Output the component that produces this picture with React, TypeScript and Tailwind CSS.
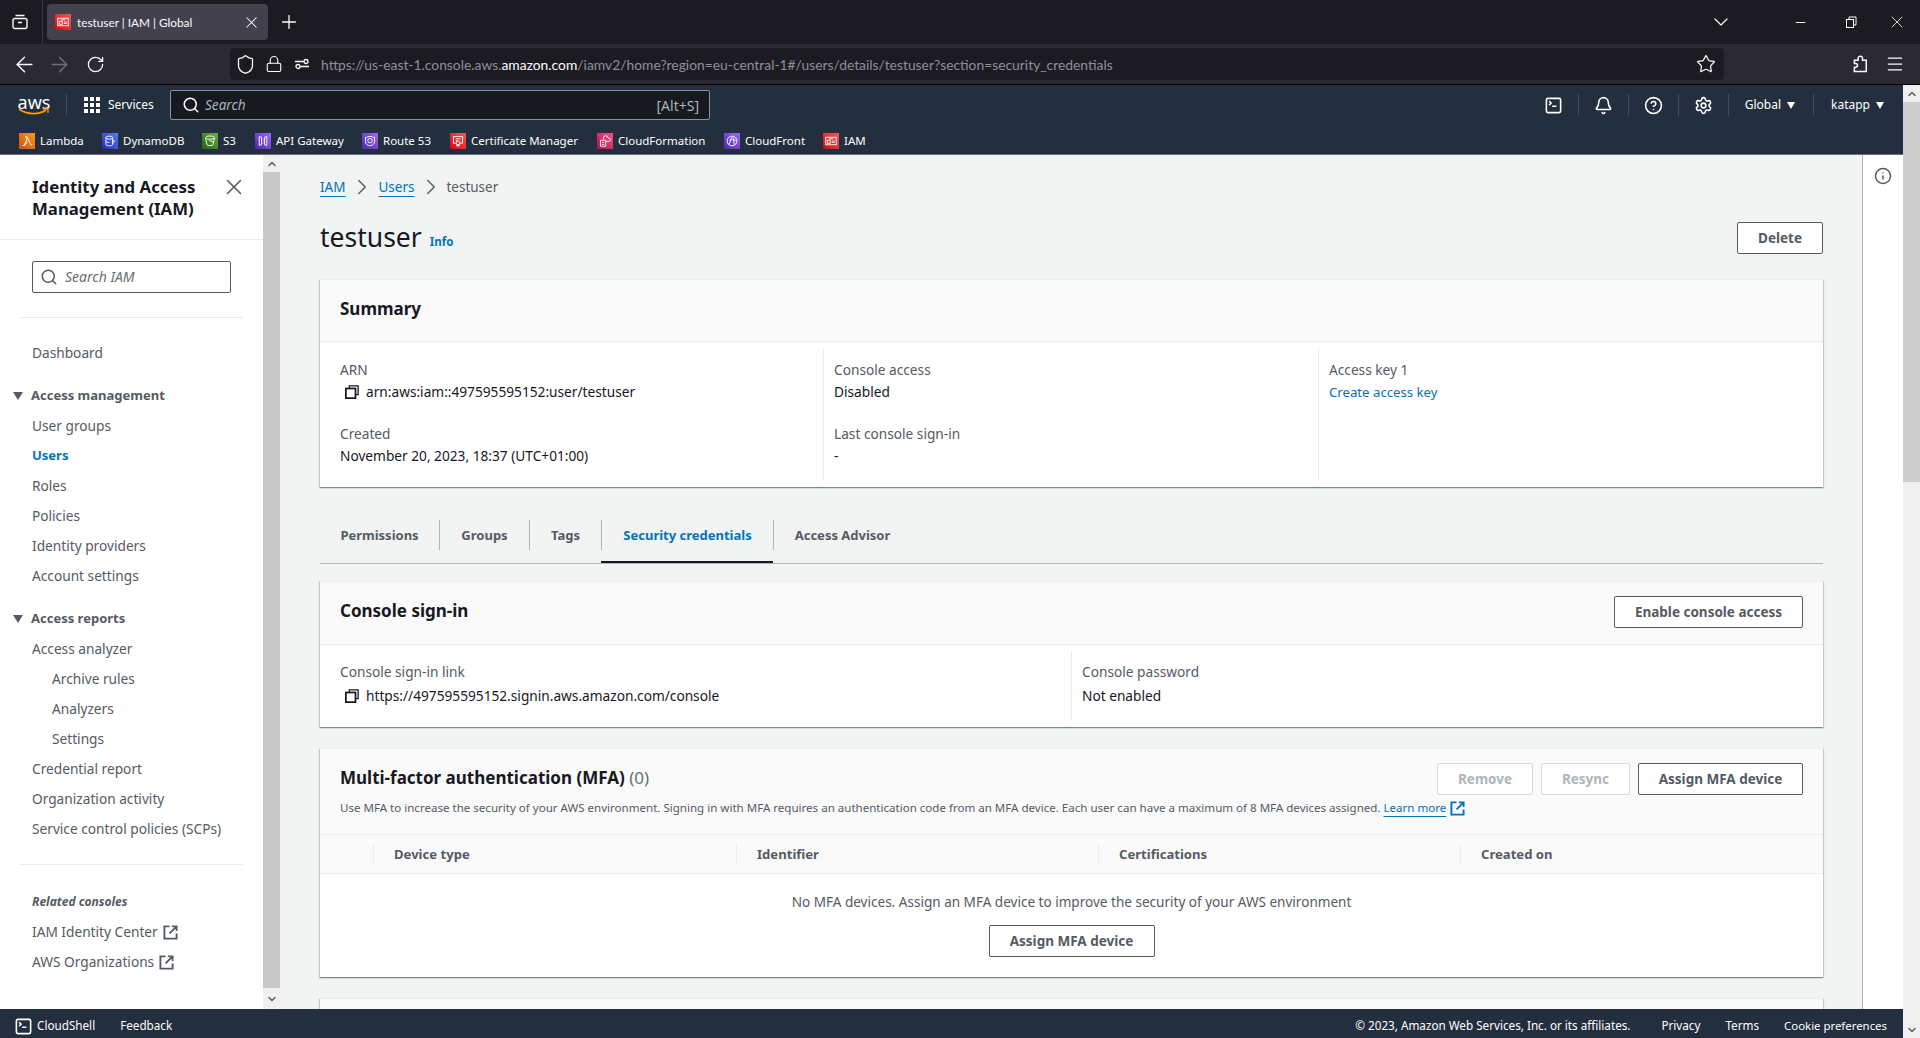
import { ReactNode } from 'react';
import {
  ArrowLeft,
  ArrowRight,
  Bell,
  ChevronDown,
  ChevronRight,
  ChevronUp,
  CircleHelp,
  Info,
  Lock,
  Menu,
  Minus,
  Plus,
  RotateCw,
  Search,
  Settings,
  Shield,
  SquareTerminal,
  Star,
  X,
} from 'lucide-react';

const font = "font-['Noto_Sans',sans-serif]";

function Fav({ from, to, children }: { from: string; to: string; children: ReactNode }) {
  return (
    <span className={`flex h-4 w-4 shrink-0 items-center justify-center ${from} ${to} bg-gradient-to-tr`}>
      <svg width="12" height="12" viewBox="0 0 16 16" fill="none" stroke="white" strokeWidth="1.200">
        {children}
      </svg>
    </span>
  );
}

const lambda = <path d="M4 14 8 6 6 2h2l5 11h2M2 14h3l3-5" />;
const dynamo = (
  <>
    <ellipse cx="7" cy="3.500" rx="4.500" ry="2" />
    <path d="M2.500 3.500v9c0 1 2 2 4.500 2s4.500-1 4.500-2v-9M2.500 8c0 1 2 2 4.500 2M11 7l3 1-3 4" />
  </>
);
const s3 = (
  <>
    <ellipse cx="8" cy="3.500" rx="6" ry="2.200" />
    <path d="M2 3.500 4 13c.2 1.500 7.800 1.500 8 0l2-9.500M7 7l6 3" />
  </>
);
const apiGw = <path d="M3 2v12l3-1V3zM13 2v12l-3-1V3zM8 5v1M8 8v1M8 11v1" />;
const route53 = (
  <>
    <path d="M2 3c2 1 3 0 3-1h6c0 1 1 2 3 1v6c0 3-3 5-6 5.500C5 14 2 12 2 9z" />
    <circle cx="8" cy="7.500" r="3" />
  </>
);
const cert = (
  <>
    <path d="M2 2h12v9h-3M5 11H2V2M5 5h6M5 7.500h2" />
    <circle cx="8" cy="10.500" r="2.500" />
    <path d="M6.500 12.500V15l1.500-1 1.500 1v-2.500" />
  </>
);
const cfn = <path d="M6 6V4a3 3 0 0 1 6 0 2.500 2.500 0 0 1 2 4.500H9M2 7h7v8H2zM4 10h3M4 12.500h3" />;
const cfront = (
  <>
    <circle cx="8" cy="8" r="6.500" />
    <path d="M4 13 7 4c1-2 3-1 3 1l1 8M5 7c2-1 5-1 8 0" />
  </>
);
const iam = (
  <>
    <rect x="1" y="3" width="14" height="10" />
    <rect x="3" y="7" width="4" height="4" />
    <path d="M5 5h6M9 8h4M9 10h4" />
  </>
);

const favorites = [
  { name: 'Lambda', from: 'from-[#c8511b]', to: 'to-[#ff9900]', icon: lambda, w: 'w-[83px]' },
  { name: 'DynamoDB', from: 'from-[#2e27ad]', to: 'to-[#527fff]', icon: dynamo, w: 'w-[100px]' },
  { name: 'S3', from: 'from-[#1b660f]', to: 'to-[#6cae3e]', icon: s3, w: 'w-[53px]' },
  { name: 'API Gateway', from: 'from-[#4d27a8]', to: 'to-[#a166ff]', icon: apiGw, w: 'w-[107px]' },
  { name: 'Route 53', from: 'from-[#4d27a8]', to: 'to-[#a166ff]', icon: route53, w: 'w-[88px]' },
  { name: 'Certificate Manager', from: 'from-[#bd0816]', to: 'to-[#ff5252]', icon: cert, w: 'w-[147px]' },
  { name: 'CloudFormation', from: 'from-[#b0084d]', to: 'to-[#ff4f8b]', icon: cfn, w: 'w-[127px]' },
  { name: 'CloudFront', from: 'from-[#4d27a8]', to: 'to-[#a166ff]', icon: cfront, w: 'w-[99px]' },
  { name: 'IAM', from: 'from-[#bd0816]', to: 'to-[#ff5252]', icon: iam, w: '' },
];

function Copy() {
  return (
    <svg width="14" height="14" viewBox="0 0 16 16" fill="none" stroke="#16191f" strokeWidth="2" className="shrink-0">
      <path d="M5 4V1h10v10h-3" strokeWidth="1.500" />
      <rect x="1" y="4" width="11" height="11" />
    </svg>
  );
}

function External({ color, size = 16 }: { color: string; size?: number }) {
  return (
    <svg width={size} height={size} viewBox="0 0 16 16" fill="none" stroke={color} strokeWidth="2" className="shrink-0">
      <path d="M7 1.500H1.500v13h13V9M9.500 1.500h5v5M14.500 1.500 7 9" />
    </svg>
  );
}

function Btn({ label, w, disabled }: { label: string; w: string; disabled?: boolean }) {
  return (
    <button
      className={`flex h-8 items-center justify-center rounded-[2px] border text-[13.500px] font-bold ${w} ${
        disabled
          ? 'border-[#d5dbdb] bg-white text-[#aab7b8]'
          : 'border-[#545b64] bg-white text-[#545b64]'
      }`}
    >
      {label}
    </button>
  );
}

function Caret() {
  return (
    <svg width="10" height="8" viewBox="0 0 10 8" className="mr-2 ml-[13px] shrink-0" fill="#545b64">
      <path d="M0 0h10L5 8z" />
    </svg>
  );
}

function HeaderCaret({ className }: { className?: string }) {
  return (
    <svg width="8" height="7" viewBox="0 0 8 7" fill="white" className={`shrink-0 ${className ?? ''}`}>
      <path d="M0 0h8L4 7z" />
    </svg>
  );
}

function NavItem({ label, active, sub }: { label: string; active?: boolean; sub?: boolean }) {
  return (
    <div
      className={`flex h-[30px] items-center ${sub ? 'pl-[52px]' : 'pl-8'} ${
        active ? 'text-[13px] font-bold text-[#0073bb]' : 'text-[13.700px] text-[#545b64]'
      }`}
    >
      {label}
    </div>
  );
}

function Card({ className, children }: { className?: string; children: ReactNode }) {
  return (
    <section
      className={`border-t border-[#eaeded] bg-white shadow-[0_1px_1px_0_rgba(0,28,36,0.3),1px_1px_1px_0_rgba(0,28,36,0.15),-1px_1px_1px_0_rgba(0,28,36,0.15)] ${className ?? ''}`}
    >
      {children}
    </section>
  );
}

function Field({ label, children }: { label: string; children: ReactNode }) {
  return (
    <div>
      <div className="h-[22px] text-[13.700px] leading-[22px] text-[#545b64]">{label}</div>
      <div className="text-[13.700px] leading-[22px] text-[#16191f]">{children}</div>
    </div>
  );
}

const tabs = [
  { label: 'Permissions', w: 'w-[119px]' },
  { label: 'Groups', w: 'w-[90px]' },
  { label: 'Tags', w: 'w-[72px]' },
  { label: 'Security credentials', w: 'w-[172px]', active: true },
  { label: 'Access Advisor', w: 'w-[138px]' },
];

function BrowserChrome() {
  return (
    <div className="font-['Lato',sans-serif]">
      <div className="flex h-11 shrink-0 items-center bg-[#1c1b22] text-[#fbfbfe]">
        <svg width="16" height="16" viewBox="0 0 16 16" fill="none" stroke="#fbfbfe" strokeWidth="1.400" className="ml-3 shrink-0">
          <rect x="1" y="4.500" width="14" height="10" rx="2" />
          <path d="M3.500 1.500h9M6 8.500h4" />
        </svg>
        <div className="ml-[14px] h-full w-px bg-[#3a3944]" />
        <div className="ml-1 flex h-9 w-[221px] items-center rounded-[4px] bg-[#42414d] pr-[7px] pl-2">
          <Fav from="from-[#bd0816]" to="to-[#ff5252]">{iam}</Fav>
          <span className="ml-[6px] pt-[2px] text-[11.800px]">testuser | IAM | Global</span>
          <X size={19} strokeWidth={1.300} className="ml-auto" />
        </div>
        <Plus size={22} strokeWidth={1.400} className="ml-[10px]" />
        <ChevronDown size={24} strokeWidth={1.200} className="ml-auto" />
        <Minus size={15} strokeWidth={1.500} className="ml-[60px]" />
        <svg width="12" height="12" viewBox="0 0 12 12" fill="none" stroke="#fbfbfe" className="ml-[37px]">
          <rect x="1.500" y="3.500" width="7" height="8" />
          <path d="M4 3V1h7v8H9" />
        </svg>
        <X size={20} strokeWidth={1} className="mr-[13px] ml-[30px]" />
      </div>
      <div className="flex h-10 shrink-0 items-center bg-[#2b2a33] text-[#fbfbfe]">
        <ArrowLeft size={25} strokeWidth={1.400} className="ml-3" />
        <ArrowRight size={25} strokeWidth={1.400} className="ml-[10px] text-[#6f6e75]" />
        <RotateCw size={19} strokeWidth={1.600} className="ml-[14px]" />
        <div className="ml-[125px] flex h-8 w-[1494px] items-center rounded-[4px] bg-[#1c1b22] pr-2 pl-[5px]">
          <Shield size={21} strokeWidth={1.500} />
          <Lock size={18} strokeWidth={1.500} className="ml-[9px]" />
          <svg width="16" height="16" viewBox="0 0 16 16" fill="none" stroke="#fbfbfe" strokeWidth="1.300" className="ml-[11px]">
            <circle cx="4" cy="10.500" r="2" />
            <circle cx="12" cy="5.500" r="2" />
            <path d="M1 5.500h8.500M6.500 10.500H15" />
          </svg>
          <span className="ml-[11px] pt-[2px] text-[13.850px] text-[#8f8f9d]">
            https://us-east-1.console.aws.<span className="text-[#fbfbfe]">amazon.com</span>/iamv2/home?region=eu-central-1#/users/details/testuser?section=security_credentials
          </span>
          <Star size={20} strokeWidth={1.500} className="ml-auto" />
        </div>
        <svg width="20" height="20" viewBox="0 0 16 16" fill="none" stroke="#fbfbfe" strokeWidth="1.200" className="ml-[126px]">
          <path d="M6.500 3.500a1.750 1.750 0 0 1 3.500 0V5h3v9H3.500v-3.500h1a1.500 1.500 0 0 0 0-3h-1V5h3z" />
        </svg>
        <Menu size={20} strokeWidth={1.500} className="ml-[15px]" />
      </div>
      <div className="h-px shrink-0 bg-black" />
    </div>
  );
}

function HeaderSep() {
  return <div className="ml-[15px] h-[22px] w-px bg-[#414d5c]" />;
}

function AwsHeader() {
  return (
    <header className="shrink-0 border-b border-[#687078] bg-[#232f3e] text-white">
      <div className="flex h-10 items-center">
        <div className="relative ml-[18px] flex h-6 w-8 flex-col items-center">
          <span className="text-[18px] leading-[18px]">aws</span>
          <svg width="32" height="8" viewBox="0 0 32 8" fill="none" className="absolute top-[15px] left-0">
            <path d="M1 1c8 6 20 6 27 1" stroke="#ff9900" strokeWidth="1.600" />
            <path d="M25 1h5v4" stroke="#ff9900" strokeWidth="1.300" />
          </svg>
        </div>
        <div className="ml-4 h-[22px] w-px bg-[#414d5c]" />
        <svg width="16" height="16" viewBox="0 0 16 16" fill="white" className="ml-[17px] shrink-0">
          <path d="M0 0h4v4H0zM6 0h4v4H6zM12 0h4v4h-4zM0 6h4v4H0zM6 6h4v4H6zM12 6h4v4h-4zM0 12h4v4H0zM6 12h4v4H6zM12 12h4v4h-4z" />
        </svg>
        <span className="ml-2 w-[45px] text-[12px]">Services</span>
        <div className="ml-[17px] flex h-[30px] w-[540px] items-center rounded-[2px] border border-[#879596] bg-[#16191f] pr-[10px] pl-[11px]">
          <Search size={18} strokeWidth={2} />
          <span className="ml-[5px] text-[13.600px] text-[#aab7b8] italic">Search</span>
          <span className="ml-auto text-[14px] text-[#aab7b8]">[Alt+S]</span>
        </div>
        <SquareTerminal size={19} className="ml-auto" />
        <HeaderSep />
        <Bell size={19} className="ml-[15px]" />
        <HeaderSep />
        <CircleHelp size={19} className="ml-[15px]" />
        <HeaderSep />
        <Settings size={19} className="ml-[15px]" />
        <HeaderSep />
        <span className="ml-4 text-[12px]">Global</span>
        <HeaderCaret className="ml-[6px]" />
        <div className="ml-[18px] h-[22px] w-px bg-[#414d5c]" />
        <span className="ml-[17px] text-[12px]">katapp</span>
        <HeaderCaret className="mr-[19px] ml-[6px]" />
      </div>
      <div className="flex h-[29px] items-center pt-[2px] pl-[19px] text-[11.500px]">
        {favorites.map((f) => (
          <div key={f.name} className={`flex items-center gap-[5px] ${f.w}`}>
            <Fav from={f.from} to={f.to}>{f.icon}</Fav>
            <span>{f.name}</span>
          </div>
        ))}
      </div>
    </header>
  );
}

function Sidebar() {
  return (
    <aside className="flex w-[280px] shrink-0">
      <div className="w-[263px] overflow-hidden bg-white">
        <div className="flex h-[85px] border-b border-[#eaeded] pt-[21px] pr-[16px] pl-8">
          <div className="w-[180px] text-[16.800px] leading-[22px] font-bold text-[#16191f]">
            Identity and Access Management (IAM)
          </div>
          <X size={26} strokeWidth={1.400} className="-mt-[2px] ml-auto text-[#545b64]" />
        </div>
        <div className="mt-[21px] ml-8 flex h-8 w-[199px] items-center rounded-[2px] border border-[#545b64] pl-[7px]">
          <Search size={18} className="text-[#545b64]" />
          <span className="-mt-px ml-[7px] text-[14px] text-[#687078] italic">Search IAM</span>
        </div>
        <div className="mx-5 mt-6 h-px bg-[#eaeded]" />
        <div className="mt-5">
          <NavItem label="Dashboard" />
        </div>
        <div className="mt-[13px] flex h-[30px] items-center text-[13px] font-bold text-[#545b64]">
          <Caret />
          Access management
        </div>
        <div>
          <NavItem label="User groups" />
          <NavItem label="Users" active />
          <NavItem label="Roles" />
          <NavItem label="Policies" />
          <NavItem label="Identity providers" />
          <NavItem label="Account settings" />
        </div>
        <div className="mt-[13px] flex h-[30px] items-center text-[13px] font-bold text-[#545b64]">
          <Caret />
          Access reports
        </div>
        <div>
          <NavItem label="Access analyzer" />
          <NavItem label="Archive rules" sub />
          <NavItem label="Analyzers" sub />
          <NavItem label="Settings" sub />
          <NavItem label="Credential report" />
          <NavItem label="Organization activity" />
          <NavItem label="Service control policies (SCPs)" />
        </div>
        <div className="mx-5 mt-5 h-px bg-[#eaeded]" />
        <div className="mt-[22px] flex h-[30px] items-center pl-8 text-[12px] font-bold text-[#545b64] italic">
          Related consoles
        </div>
        <div className="flex h-[30px] items-center gap-[5px] pl-8 text-[13.700px] text-[#545b64]">
          IAM Identity Center <External color="#545b64" size={15} />
        </div>
        <div className="flex h-[30px] items-center gap-[5px] pl-8 text-[13.700px] text-[#545b64]">
          AWS Organizations <External color="#545b64" size={15} />
        </div>
      </div>
      <div className="flex w-[17px] flex-col justify-between bg-[#c8c8c8]">
        <div className="flex h-[17px] items-center justify-center bg-[#f0f0f0]">
          <ChevronUp size={12} strokeWidth={3} className="text-[#606060]" />
        </div>
        <div className="flex h-[21px] items-center justify-center bg-[#f0f0f0]">
          <ChevronDown size={12} strokeWidth={3} className="text-[#606060]" />
        </div>
      </div>
    </aside>
  );
}

function Main() {
  return (
    <main className="min-w-0 flex-1 overflow-hidden bg-[#f2f3f3] pr-[39px] pl-10">
      <div className="mt-5 flex h-6 items-center text-[13.500px] text-[#545b64]">
        <span className="text-[#0073bb] underline underline-offset-4">IAM</span>
        <ChevronRight size={26} strokeWidth={1.300} className="mr-[3px] ml-1" />
        <span className="text-[#0073bb] underline underline-offset-4">Users</span>
        <ChevronRight size={26} strokeWidth={1.300} className="mr-[2px] ml-1" />
        <span>testuser</span>
      </div>
      <div className="mt-[23px] flex h-8 items-center">
        <h1 className="mb-[2px] text-[26.500px] leading-8 text-[#16191f]">testuser</h1>
        <span className="mt-[8px] ml-2 text-[11.500px] font-bold text-[#0073bb]">Info</span>
        <div className="ml-auto">
          <Btn label="Delete" w="w-[86px]" />
        </div>
      </div>

      <Card className="mt-[25px]">
        <div className="flex h-[62px] items-center border-b border-[#eaeded] bg-[#fafafa] px-5 pb-1 text-[17px] font-bold text-[#16191f]">
          Summary
        </div>
        <div className="grid h-[145px] grid-cols-[503px_495px_1fr] py-[6px]">
          <div className="flex flex-col gap-[20px] pt-[11px] pl-5">
            <Field label="ARN">
              <span className="flex items-center gap-[7px] pl-[5px]">
                <Copy />
                arn:aws:iam::497595595152:user/testuser
              </span>
            </Field>
            <Field label="Created">November 20, 2023, 18:37 (UTC+01:00)</Field>
          </div>
          <div className="flex flex-col gap-[20px] border-l border-[#eaeded] pt-[11px] pl-[10px]">
            <Field label="Console access">Disabled</Field>
            <Field label="Last console sign-in">-</Field>
          </div>
          <div className="border-l border-[#eaeded] pt-[11px] pl-[10px]">
            <Field label="Access key 1">
              <span className="text-[13.200px] text-[#0073bb]">Create access key</span>
            </Field>
          </div>
        </div>
      </Card>

      <div className="mt-[33px] flex border-b border-[#aab7b8]">
        {tabs.map((t, i) => (
          <div key={t.label} className={`flex h-[43px] flex-col border-b-2 ${t.active ? 'border-[#16191f]' : 'border-transparent'} ${t.w}`}>
            <div
              className={`flex h-[30px] items-center justify-center pt-[2px] text-[13px] font-bold ${i > 0 ? 'border-l border-[#aab7b8]' : ''} ${
                t.active ? 'text-[#0073bb]' : 'text-[#545b64]'
              }`}
            >
              {t.label}
            </div>
          </div>
        ))}
      </div>

      <Card className="mt-[17px]">
        <div className="flex h-[63px] items-center justify-between border-b border-[#eaeded] bg-[#fafafa] px-5 pb-[2px]">
          <h2 className="mb-[3px] text-[17px] font-bold text-[#16191f]">Console sign-in</h2>
          <Btn label="Enable console access" w="w-[189px]" />
        </div>
        <div className="grid h-[82px] grid-cols-[751px_1fr] py-[6px]">
          <div className="pt-[10px] pl-5">
            <div className="h-[22px] text-[13.700px] leading-[22px] text-[#545b64]">Console sign-in link</div>
            <div className="mt-[2px] flex items-center gap-[7px] pl-[5px] text-[13.700px] leading-[22px] text-[#16191f]">
              <Copy />
              https://497595595152.signin.aws.amazon.com/console
            </div>
          </div>
          <div className="border-l border-[#eaeded] pt-[10px] pl-[10px]">
            <div className="h-[22px] text-[13.700px] leading-[22px] text-[#545b64]">Console password</div>
            <div className="mt-[2px] text-[13.700px] leading-[22px] text-[#16191f]">Not enabled</div>
          </div>
        </div>
      </Card>

      <Card className="mt-[21px]">
        <div className="h-[86px] border-b border-[#eaeded] bg-[#fafafa] px-5 pt-[14px]">
          <div className="flex items-center">
            <h2 className="mb-[3px] text-[17px] font-bold text-[#16191f]">
              Multi-factor authentication (MFA) <span className="font-normal text-[#687078]">(0)</span>
            </h2>
            <div className="ml-auto flex gap-2">
              <Btn label="Remove" w="w-[96px]" disabled />
              <Btn label="Resync" w="w-[89px]" disabled />
              <Btn label="Assign MFA device" w="w-[165px]" />
            </div>
          </div>
          <p className="mt-[3px] flex items-center text-[11.550px] leading-[20px] text-[#545b64]">
            Use MFA to increase the security of your AWS environment. Signing in with MFA requires an authentication code from an MFA device. Each user can have a maximum of 8 MFA devices assigned.
            <span className="ml-[3px] text-[#0073bb] underline underline-offset-4">Learn more</span>
            <span className="ml-[4px]"><External color="#0073bb" size={15} /></span>
          </p>
        </div>
        <div className="grid h-[39px] grid-cols-[53px_363px_362px_362px_1fr] items-center border-b border-[#eaeded] bg-[#fafafa] text-[13.100px] font-bold text-[#545b64]">
          <div />
          {['Device type', 'Identifier', 'Certifications', 'Created on'].map((h) => (
            <div key={h} className="flex h-5 items-center border-l border-[#eaeded] pt-[2px] pl-5">{h}</div>
          ))}
        </div>
        <div className="flex h-[103px] flex-col items-center pt-[17px]">
          <div className="text-[13.550px] leading-[22px] text-[#545b64]">
            No MFA devices. Assign an MFA device to improve the security of your AWS environment
          </div>
          <div className="mt-[12px]">
            <Btn label="Assign MFA device" w="w-[166px]" />
          </div>
        </div>
      </Card>

      <Card className="mt-[21px] h-20">
        <div className="h-full bg-[#fafafa]" />
      </Card>
    </main>
  );
}

export default function App() {
  return (
    <div className={`flex h-[1038px] flex-col overflow-hidden ${font}`}>
      <BrowserChrome />
      <div className="flex min-h-0 flex-1">
        <div className="flex min-w-0 flex-1 flex-col">
          <AwsHeader />
          <div className="flex min-h-0 flex-1">
            <Sidebar />
            <Main />
            <div className="flex w-[41px] shrink-0 justify-center border-l border-[#aab7b8] bg-white pt-3">
              <Info size={18} strokeWidth={2} className="text-[#545b64]" />
            </div>
          </div>
          <footer className="flex h-[29px] shrink-0 items-center bg-[#232f3e] pt-[5px] pl-[14px] text-[11.700px] text-white">
            <SquareTerminal size={19} />
            <span className="ml-1">CloudShell</span>
            <span className="ml-[25px]">Feedback</span>
            <span className="ml-auto">© 2023, Amazon Web Services, Inc. or its affiliates.</span>
            <span className="ml-[31px]">Privacy</span>
            <span className="ml-[25px]">Terms</span>
            <span className="mr-4 ml-[25px] text-[11.400px]">Cookie preferences</span>
          </footer>
        </div>
        <div className="flex w-[17px] shrink-0 flex-col bg-[#f0f0f0]">
          <div className="flex h-[17px] items-center justify-center">
            <ChevronUp size={12} strokeWidth={3} className="text-[#606060]" />
          </div>
          <div className="h-[380px] bg-[#cdcdcd]" />
          <div className="mt-auto flex h-[17px] items-center justify-center">
            <ChevronDown size={12} strokeWidth={3} className="text-[#606060]" />
          </div>
        </div>
      </div>
    </div>
  );
}
